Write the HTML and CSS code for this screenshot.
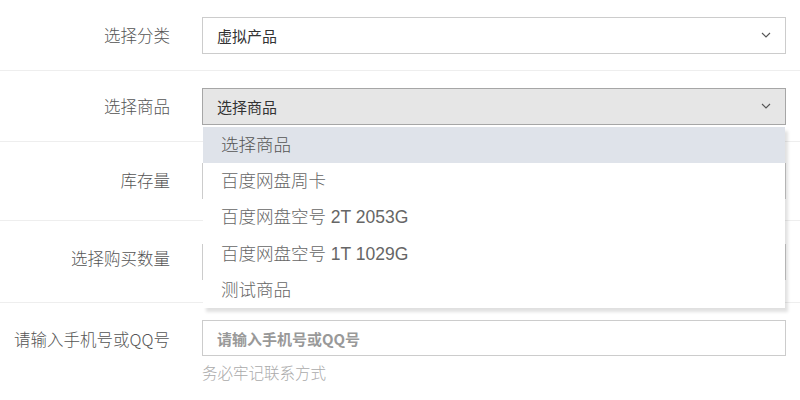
FILE: index.html
```html
<!DOCTYPE html>
<html lang="zh-CN">
<head>
<meta charset="utf-8">
<title>下单</title>
<link rel="stylesheet" href="styles.css">
</head>
<body>
<form class="form">
  <div class="row row-1">
    <label class="label">选择分类</label>
    <div class="field">
      <div class="select">
        <span>虚拟产品</span>
        <svg class="chev" width="10" height="6" viewBox="0 0 10 6"><path d="M1 1l4 4 4-4" fill="none" stroke="#555" stroke-width="1.1"/></svg>
      </div>
    </div>
  </div>
  <div class="row row-2">
    <label class="label">选择商品</label>
    <div class="field">
      <div class="select select-open">
        <span>选择商品</span>
        <svg class="chev" width="10" height="6" viewBox="0 0 10 6"><path d="M1 1l4 4 4-4" fill="none" stroke="#555" stroke-width="1.1"/></svg>
      </div>
      <ul class="dropdown">
        <li class="opt active">选择商品</li>
        <li class="opt">百度网盘周卡</li>
        <li class="opt">百度网盘空号 2T 2053G</li>
        <li class="opt">百度网盘空号 1T 1029G</li>
        <li class="opt">测试商品</li>
      </ul>
    </div>
  </div>
  <div class="row row-3">
    <label class="label">库存量</label>
    <div class="field"><div class="input"></div></div>
  </div>
  <div class="row row-4">
    <label class="label">选择购买数量</label>
    <div class="field"><div class="input"></div></div>
  </div>
  <div class="row row-5">
    <label class="label">请输入手机号或QQ号</label>
    <div class="field">
      <div class="input"><span class="ph">请输入手机号或QQ号</span></div>
      <div class="help">务必牢记联系方式</div>
    </div>
  </div>
</form>
</body>
</html>
```
FILE: styles.css
```css
* { box-sizing: border-box; }
html, body { margin: 0; padding: 0; background: #fff; }
body {
  font-family: "Noto Sans CJK SC", "Liberation Sans", sans-serif;
  color: #555;
  width: 800px;
  height: 400px;
  overflow: hidden;
}
.form { display: flex; flex-direction: column; }
.row {
  display: flex;
  align-items: center;
  border-bottom: 1px solid #eee;
  padding-right: 14px;
}
.row-1 { height: 71px; }
.row-2 { height: 71px; }
.row-3 { height: 79px; }
.row-4 { height: 82px; }
.row-5 { align-items: flex-start; border-bottom: none; padding-top: 17px; }
.label {
  width: 170px;
  flex: none;
  text-align: right;
  font-size: 16.5px;
  font-weight: 300;
  color: #555;
  margin-right: 32px;
  line-height: 36px;
}
.row-3 .label { margin-bottom: 2px; }
.row-4 .label { margin-bottom: 8px; }
.row-5 .label { line-height: 38px; }
.field { flex: 1; position: relative; }
.select {
  height: 37px;
  border: 1px solid #ccc;
  background: #fff;
  display: flex;
  align-items: center;
  justify-content: space-between;
  padding: 0 14px 0 14px;
  font-size: 15px;
  color: #333;
}
.select-open { background: #e6e6e6; border-color: #a6a6a6; }
.chev { display: block; }
.input {
  height: 36px;
  border: 1px solid #ccc;
  background: #fff;
  display: flex;
  align-items: center;
  padding: 0 14px;
}
.ph { font-size: 15px; color: #999; font-weight: 700; }
.help { font-size: 15.5px; color: #aaa; margin-top: 5px; font-weight: 300; }
.dropdown {
  position: absolute;
  top: 39px;
  left: 1px;
  right: 1px;
  margin: 0;
  padding: 0;
  list-style: none;
  background: #fff;
  box-shadow: 3px 4px 3px rgba(0,0,0,0.12);
  z-index: 5;
}
.opt {
  height: 36.4px;
  line-height: 36px;
  padding-left: 18px;
  font-family: "Liberation Sans", "Noto Sans CJK SC", sans-serif;
  font-size: 17.5px;
  font-weight: 300;
  color: #666;
}
.opt.active { background: #dfe3ea; color: #555; }
```
